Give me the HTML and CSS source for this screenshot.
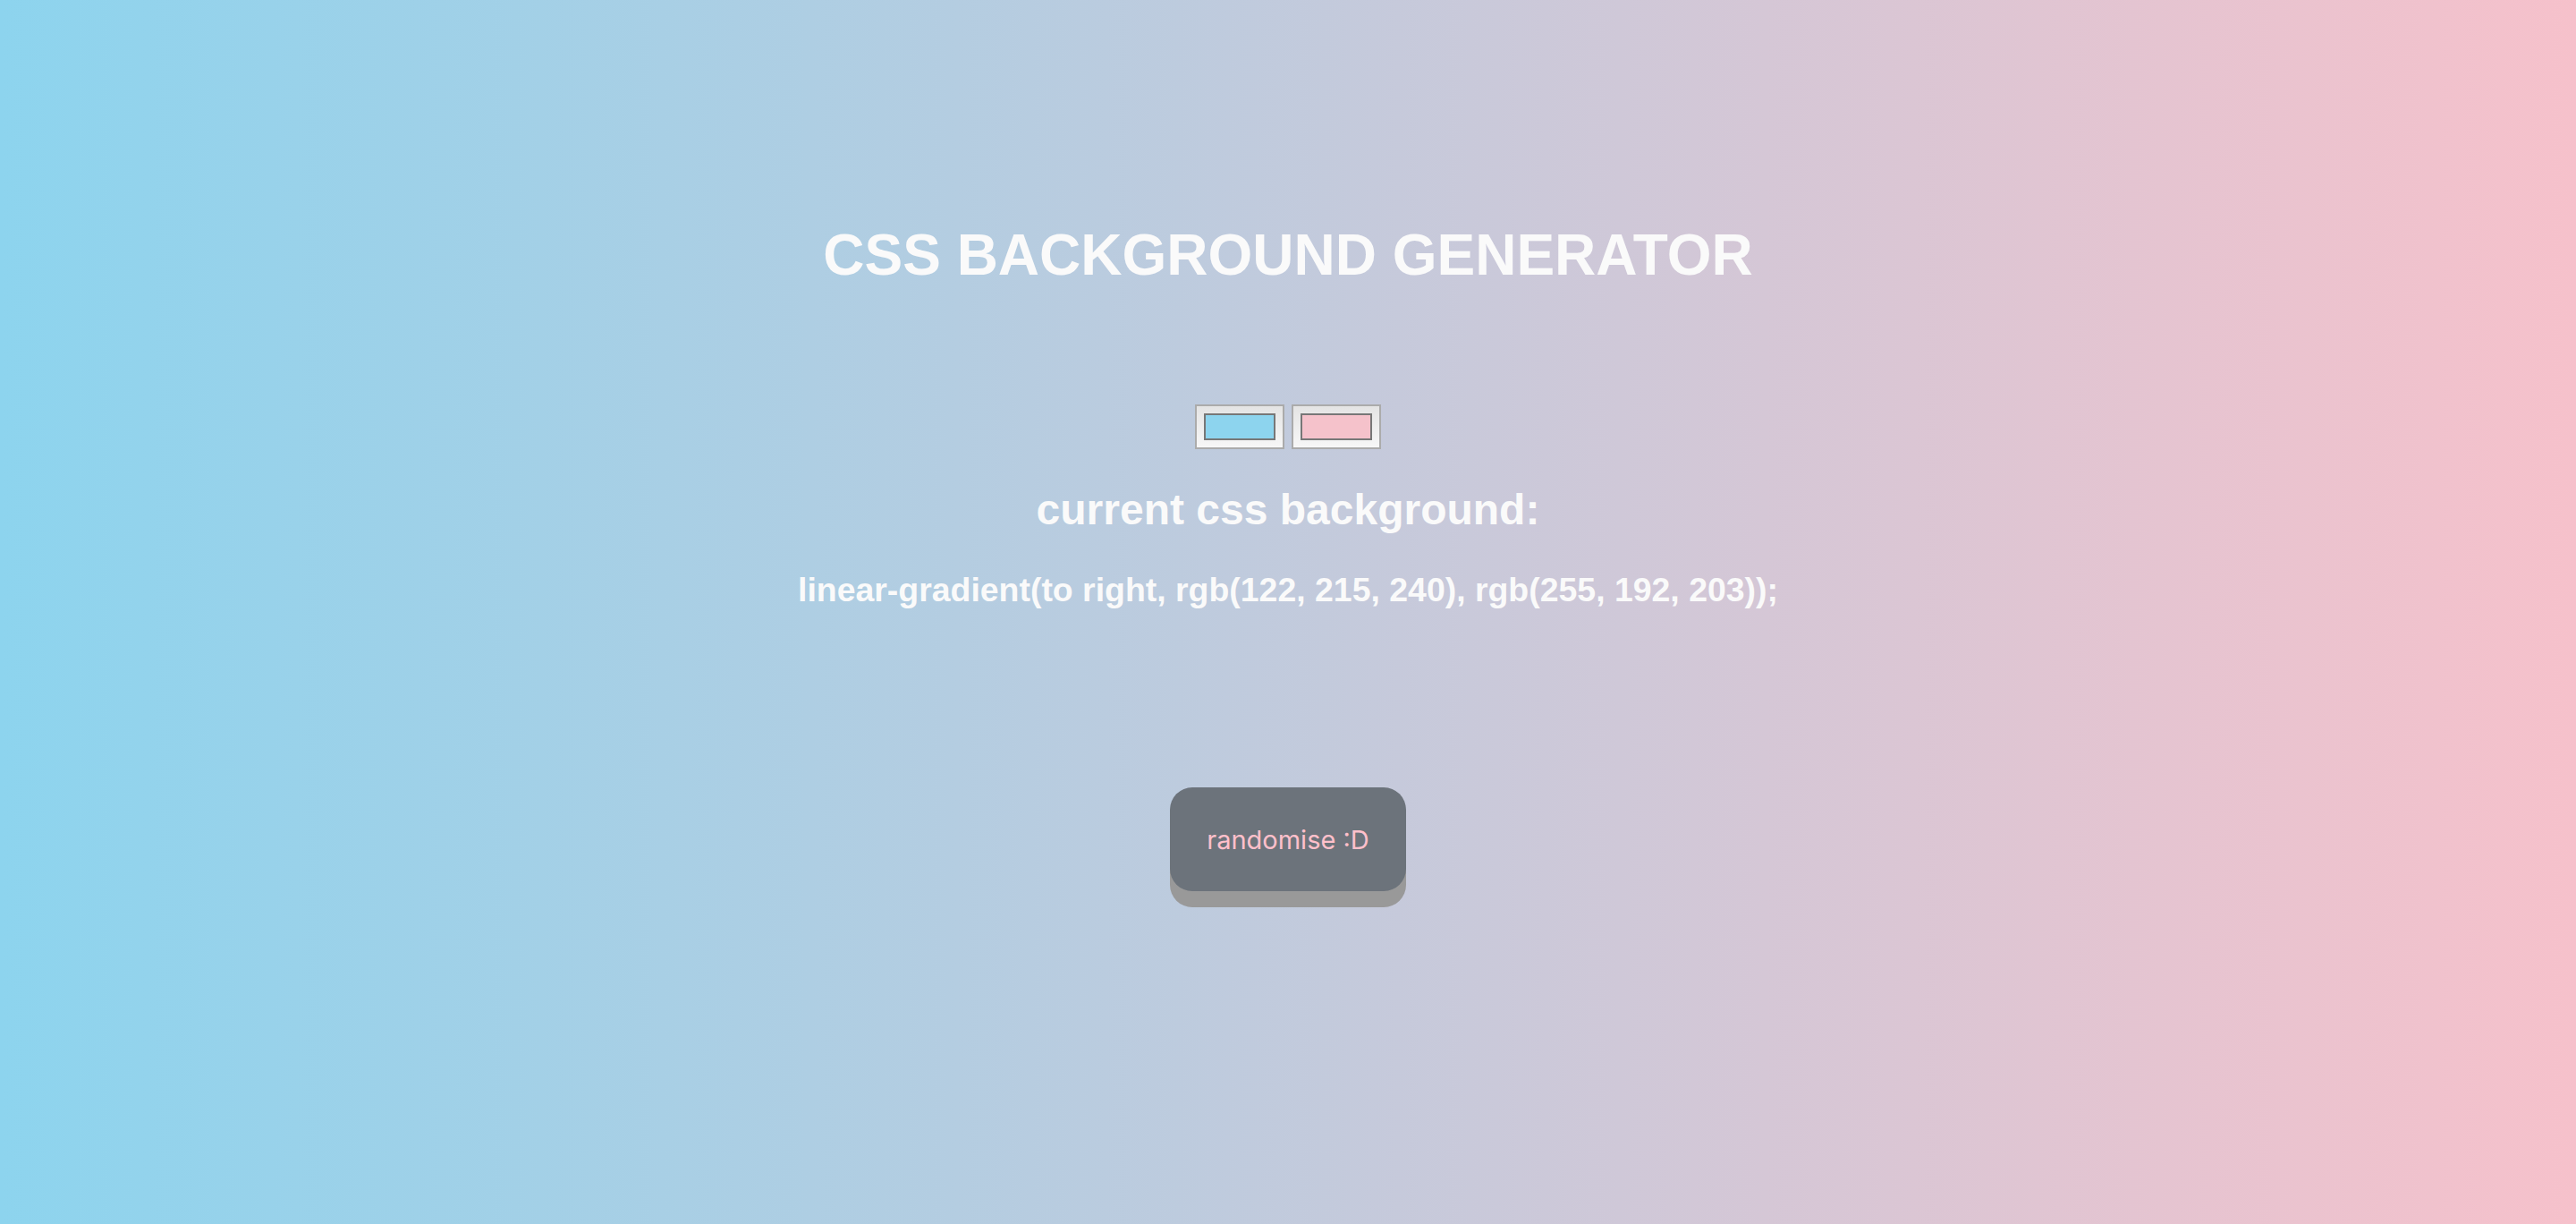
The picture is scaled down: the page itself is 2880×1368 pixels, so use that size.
FILE: index.html
```html
<!DOCTYPE html>
<html lang="en">
<head>
<meta charset="utf-8">
<title>CSS Background Generator</title>
<link rel="stylesheet" href="styles.css">
</head>
<body>
<main class="page">
  <h1 class="title">CSS BACKGROUND GENERATOR</h1>
  <div class="pickers">
    <input class="swatch" type="color" value="#8dd4ee" aria-label="first colour">
    <input class="swatch" type="color" value="#f5c2cb" aria-label="second colour">
  </div>
  <h2 class="subtitle">current css background:</h2>
  <h3 class="code">linear-gradient(to right, rgb(122, 215, 240), rgb(255, 192, 203));</h3>
  <button class="randomise" type="button">randomise :D</button>
</main>
</body>
</html>
```
FILE: styles.css
```css
html, body {
  margin: 0;
  height: 100%;
}

body {
  background: linear-gradient(to right, #8dd4ee, #f6c1cb);
  font-family: "Liberation Sans", Arial, sans-serif;
  color: #fafafa;
}

.page {
  display: flex;
  flex-direction: column;
  align-items: center;
  padding-top: 248px;
  text-align: center;
}

.title {
  margin: 0;
  font-size: 64px;
  line-height: 74px;
  font-weight: bold;
}

.pickers {
  display: flex;
  gap: 8px;
  margin-top: 130px;
}

.swatch {
  -webkit-appearance: none;
  appearance: none;
  box-sizing: border-box;
  width: 100px;
  height: 50px;
  margin: 0;
  padding: 8px;
  border: 2px solid #ababab;
  background: linear-gradient(#e4e4e4, #f7f7f7);
  cursor: pointer;
}

.swatch::-webkit-color-swatch-wrapper {
  padding: 0;
}

.swatch::-webkit-color-swatch {
  border: 2px solid #777;
  border-radius: 0;
}

.subtitle {
  margin: 40px 0 0;
  font-size: 48px;
  line-height: 55px;
  font-weight: bold;
}

.code {
  margin: 41px 0 0;
  font-size: 37.44px;
  line-height: 43px;
  font-weight: bold;
}

.randomise {
  margin-top: 199px;
  width: 264px;
  height: 116px;
  border: none;
  border-radius: 25px;
  background: #6c737b;
  box-shadow: 0 18px 0 #999;
  color: #ffc0cb;
  font-family: Inter, "Liberation Sans", sans-serif;
  font-size: 29px;
  cursor: pointer;
}
```
